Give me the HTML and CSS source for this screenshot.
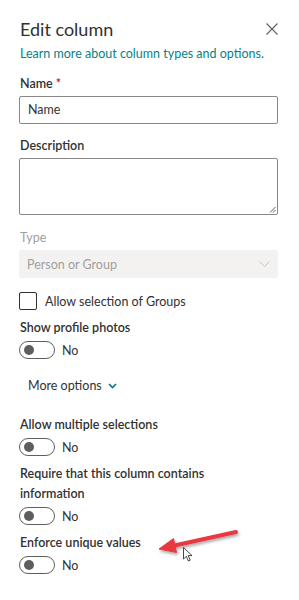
FILE: index.html
```html
<!DOCTYPE html>
<html lang="en">
<head>
    <meta charset="UTF-8">
    <meta name="viewport" content="width=device-width, initial-scale=1.0">
    <title>Edit column</title>
    <link rel="stylesheet" href="styles.css">
</head>
<body>
    <div class="panel">
        <div class="panel-header">
            <h1 class="panel-title">Edit column</h1>
            <button class="close-btn" aria-label="Close">
                <svg width="12" height="12" viewBox="0 0 12 12"><path d="M0.5 0.5 L11.5 11.5 M11.5 0.5 L0.5 11.5" stroke="#605e5c" stroke-width="1.1" fill="none"/></svg>
            </button>
        </div>
        <a class="learn-link" href="#">Learn more about column types and options.</a>

        <div class="field field-name">
            <div class="label">Name <span class="required">*</span></div>
            <div class="text-input">Name</div>
        </div>

        <div class="field">
            <div class="label">Description</div>
            <div class="text-area">
                <svg class="grip" width="7" height="7" viewBox="0 0 7 7"><path d="M6.5 1 L1 6.5 M6.5 4 L4 6.5" stroke="#605e5c" stroke-width="1" fill="none"/></svg>
            </div>
        </div>

        <div class="field field-type">
            <div class="label disabled">Type</div>
            <div class="select disabled">
                <span>Person or Group</span>
                <svg width="11" height="6" viewBox="0 0 11 6"><path d="M0.5 0.5 L5.5 5.5 L10.5 0.5" stroke="#c8c6c4" stroke-width="1" fill="none"/></svg>
            </div>
        </div>

        <div class="check-row">
            <span class="checkbox"></span>
            <span class="check-label">Allow selection of Groups</span>
        </div>

        <div class="field field-toggle first-toggle">
            <div class="label">Show profile photos</div>
            <div class="toggle-row"><span class="toggle"><span class="knob"></span></span><span class="toggle-text">No</span></div>
        </div>

        <div class="more-options">
            More options
            <svg width="9" height="6" viewBox="0 0 9 6"><path d="M1 1 L4.5 4.5 L8 1" stroke="#03787c" stroke-width="1.6" fill="none"/></svg>
        </div>

        <div class="field field-toggle after-more">
            <div class="label">Allow multiple selections</div>
            <div class="toggle-row"><span class="toggle"><span class="knob"></span></span><span class="toggle-text">No</span></div>
        </div>

        <div class="field field-toggle">
            <div class="label">Require that this column contains<br>information</div>
            <div class="toggle-row"><span class="toggle"><span class="knob"></span></span><span class="toggle-text">No</span></div>
        </div>

        <div class="field field-toggle">
            <div class="label">Enforce unique values</div>
            <div class="toggle-row"><span class="toggle"><span class="knob"></span></span><span class="toggle-text">No</span></div>
        </div>
    </div>

    <!-- annotation drawn over the screenshot -->
    <svg class="annotation" width="299" height="600" viewBox="0 0 299 600">
        <defs>
            <filter id="shadow" x="-20%" y="-50%" width="140%" height="200%">
                <feDropShadow dx="1" dy="2" stdDeviation="1.5" flood-color="#000" flood-opacity="0.35"/>
            </filter>
        </defs>
        <g filter="url(#shadow)" fill="#e8393f" stroke="#e8393f">
            <path d="M236 532 L170 546.5" stroke-width="4" stroke-linecap="round"/>
            <polygon points="159,549 173.5,538.5 176.5,552.5" stroke-width="1"/>
        </g>
        <path class="cursor" d="M183.5 547.5 L183.5 559 L186.3 556.3 L188.3 561 L190.2 560.2 L188.2 555.6 L192 555.6 Z" fill="#fff" stroke="#333" stroke-width="0.9"/>
    </svg>
</body>
</html>
```

FILE: styles.css
```css
body {
    margin: 0;
    background: #ffffff;
    font-family: Lato, "Noto Sans", sans-serif;
    font-size: 12.5px;
    color: #323130;
}
.panel {
    width: 259px;
    padding: 16px 21px 20px 19px;
}
.panel-header {
    display: flex;
    align-items: center;
    justify-content: space-between;
    height: 26px;
}
.panel-title {
    margin: 0;
    font-size: 18px;
    font-weight: 400;
    line-height: 26px;
    padding-left: 1px;
}
.close-btn {
    border: none;
    background: none;
    padding: 0;
    width: 12px;
    height: 12px;
    display: flex;
}
.learn-link {
    display: block;
    margin-top: 2px;
    padding-left: 1px;
    font-size: 12.5px;
    line-height: 20px;
    color: #038387;
    text-decoration: none;
    white-space: nowrap;
}
.field {
    margin-top: 12px;
}
.field-name {
    margin-top: 10px;
}
.label {
    font-size: 12.5px;
    font-weight: 600;
    line-height: 20px;
    padding-left: 1px;
}
.label.disabled {
    color: #a19f9d;
    font-weight: 400;
}
.required {
    color: #a4262c;
}
.text-input {
    box-sizing: border-box;
    margin-top: 2px;
    height: 28px;
    border: 1px solid #8a8886;
    border-radius: 2px;
    padding: 0 8px;
    line-height: 26px;
    color: #323130;
}
.text-area {
    box-sizing: border-box;
    position: relative;
    margin-top: 2px;
    height: 57px;
    border: 1px solid #8a8886;
    border-radius: 2px;
}
.grip {
    position: absolute;
    right: 1px;
    bottom: 1px;
}
.field-type {
    margin-top: 13px;
}
.select {
    box-sizing: border-box;
    margin-top: 2px;
    height: 28px;
    background: #f3f2f1;
    border-radius: 2px;
    padding: 0 8px;
    display: flex;
    align-items: center;
    justify-content: space-between;
    color: #a19f9d;
}
.check-row {
    display: flex;
    align-items: center;
    margin-top: 13px;
    height: 20px;
}
.checkbox {
    box-sizing: border-box;
    width: 18px;
    height: 18px;
    border: 1px solid #323130;
    border-radius: 2px;
}
.check-label {
    margin-left: 8px;
}
.field-toggle {
    margin-top: 7px;
}
.toggle-row {
    display: flex;
    align-items: center;
    margin-top: 2px;
    height: 20px;
}
.toggle {
    box-sizing: border-box;
    width: 36px;
    height: 18px;
    border: 1px solid #605e5c;
    border-radius: 9px;
    display: flex;
    align-items: center;
    padding-left: 4px;
}
.knob {
    width: 10px;
    height: 10px;
    border-radius: 50%;
    background: #605e5c;
}
.toggle-text {
    margin-left: 7px;
}
.more-options {
    display: flex;
    align-items: center;
    gap: 6px;
    margin-top: 16px;
    padding-left: 9px;
    line-height: 20px;
    color: #323130;
}
.field-toggle.after-more {
    margin-top: 19px;
}
.annotation {
    position: absolute;
    left: 0;
    top: 0;
    pointer-events: none;
}
```
